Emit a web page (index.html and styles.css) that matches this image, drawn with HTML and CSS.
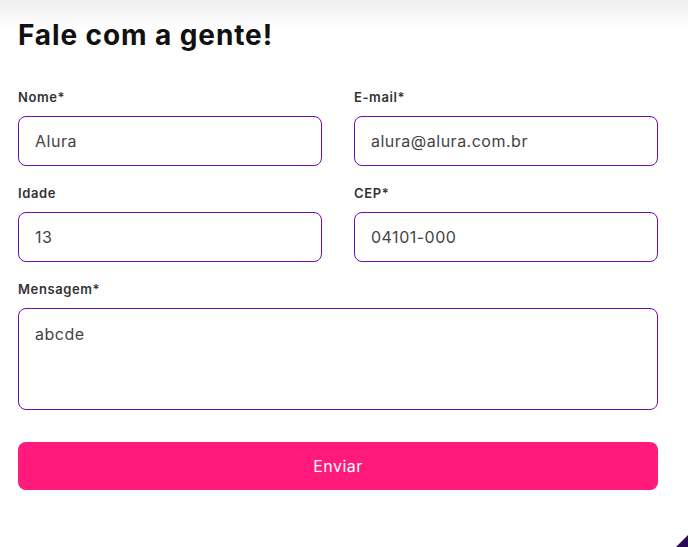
FILE: index.html
```html
<!DOCTYPE html>
<html lang="pt-BR">
<head>
<meta charset="utf-8">
<title>Fale com a gente!</title>
<link rel="stylesheet" href="styles.css">
</head>
<body>
<main class="contato">
  <h1 class="contato__titulo">Fale com a gente!</h1>
  <form class="formulario">
    <div class="campo">
      <label class="campo__label" for="nome">Nome*</label>
      <input class="campo__input" id="nome" type="text" value="Alura">
    </div>
    <div class="campo">
      <label class="campo__label" for="email">E-mail*</label>
      <input class="campo__input" id="email" type="email" value="alura@alura.com.br">
    </div>
    <div class="campo">
      <label class="campo__label" for="idade">Idade</label>
      <input class="campo__input" id="idade" type="text" value="13">
    </div>
    <div class="campo">
      <label class="campo__label" for="cep">CEP*</label>
      <input class="campo__input" id="cep" type="text" value="04101-000">
    </div>
    <div class="campo campo--largo">
      <label class="campo__label" for="mensagem">Mensagem*</label>
      <textarea class="campo__input campo__textarea" id="mensagem">abcde</textarea>
    </div>
    <button class="formulario__botao" type="button">Enviar</button>
  </form>
</main>
<div class="rodape-canto"></div>
</body>
</html>
```

FILE: styles.css
```css
* { box-sizing: border-box; }

html, body {
  margin: 0;
  height: 100%;
}

body {
  font-family: Inter, "Open Sans", sans-serif;
  background: linear-gradient(#efefef 0, #ffffff 30px) no-repeat;
  background-color: #fff;
  position: relative;
  overflow: hidden;
}

.contato {
  width: 640px;
  margin-left: 18px;
  padding-top: 16px;
}

.contato__titulo {
  margin: 0;
  font-size: 28px;
  line-height: 38px;
  font-weight: 700;
  color: #111;
  letter-spacing: 0.9px;
}

.formulario {
  display: grid;
  grid-template-columns: 1fr 1fr;
  column-gap: 32px;
  row-gap: 16px;
  margin-top: 32px;
}

.campo {
  display: flex;
  flex-direction: column;
}

.campo--largo {
  grid-column: 1 / -1;
}

.campo__label {
  font-size: 13px;
  line-height: 22px;
  font-weight: 600;
  color: #333;
  letter-spacing: 0.6px;
  margin-bottom: 8px;
}

.campo__input {
  height: 50px;
  border: 1px solid #6a0dad;
  border-radius: 8px;
  padding: 0 16px;
  font-family: inherit;
  font-size: 16px;
  letter-spacing: 0.5px;
  color: #444;
  background: #fff;
  outline: none;
}

.campo__textarea {
  height: 102px;
  padding: 14px 16px;
  resize: none;
  line-height: 22px;
}

.formulario__botao {
  grid-column: 1 / -1;
  margin-top: 16px;
  height: 48px;
  border: none;
  border-radius: 8px;
  background: #ff1a7b;
  color: #fff;
  font-family: inherit;
  font-size: 16px;
  letter-spacing: 0.5px;
}

.rodape-canto {
  position: absolute;
  right: 0;
  bottom: 0;
  width: 12px;
  height: 12px;
  background: #2a0a4e;
  clip-path: polygon(100% 0, 100% 100%, 0 100%);
}
```
